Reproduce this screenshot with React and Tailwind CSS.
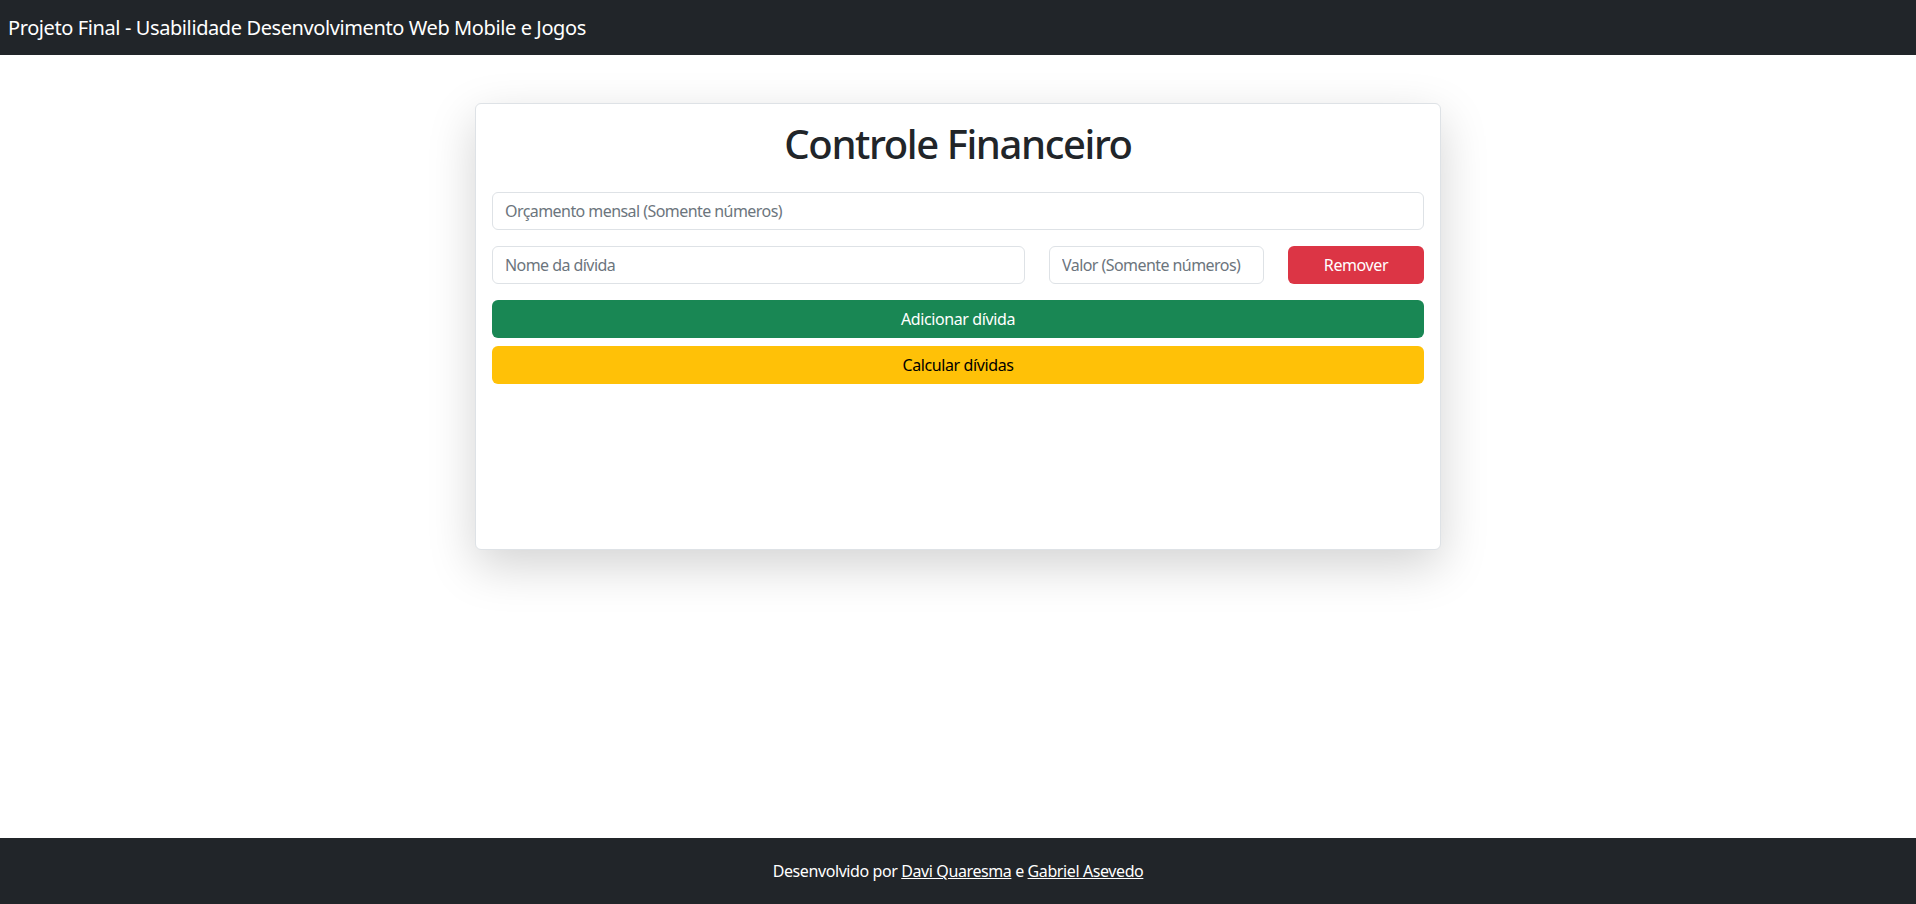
export default function App() {
  return (
    <div className="min-h-screen flex flex-col bg-white text-[#212529] font-['Noto_Sans',sans-serif] tracking-[-0.025em]">
      <header className="h-[55px] bg-[#212529] flex items-center px-2">
        <span className="text-white text-[20px] leading-[30px] tracking-[-0.02em]">Projeto Final - Usabilidade Desenvolvimento Web Mobile e Jogos</span>
      </header>
      <main className="flex-1">
        <div className="mx-auto mt-[48px] w-[966px] h-[447px] bg-white border border-[#dee2e6] rounded-[6px] shadow-[0_1rem_3rem_rgba(0,0,0,0.175)] p-4">
          <h1 className="text-center text-[40px] leading-[48px] font-medium mb-[24px] tracking-[-0.035em]">Controle Financeiro</h1>
          <input
            className="block w-full h-[38px] border border-[#dee2e6] rounded-[6px] px-3 text-[16px] placeholder-[#6c757d] outline-none tracking-[-0.035em]"
            placeholder="Orçamento mensal (Somente números)"
          />
          <div className="flex gap-6 mt-[16px]">
            <input
              className="block w-[533px] h-[38px] border border-[#dee2e6] rounded-[6px] px-3 text-[16px] placeholder-[#6c757d] outline-none tracking-[-0.035em]"
              placeholder="Nome da dívida"
            />
            <input
              className="block w-[215px] h-[38px] border border-[#dee2e6] rounded-[6px] px-3 text-[16px] placeholder-[#6c757d] outline-none tracking-[-0.035em]"
              placeholder="Valor (Somente números)"
            />
            <button className="flex-1 h-[38px] rounded-[6px] bg-[#dc3545] text-white text-[16px]">Remover</button>
          </div>
          <button className="block w-full h-[38px] mt-[16px] rounded-[6px] bg-[#198754] text-white text-[16px]">Adicionar dívida</button>
          <button className="block w-full h-[38px] mt-[8px] rounded-[6px] bg-[#ffc107] text-black text-[16px]">Calcular dívidas</button>
        </div>
      </main>
      <footer className="h-[66px] bg-[#212529] flex items-center justify-center text-white text-[16px]">
        <span>
          Desenvolvido por <a href="#" className="underline">Davi Quaresma</a> e <a href="#" className="underline">Gabriel Asevedo</a>
        </span>
      </footer>
    </div>
  );
}
